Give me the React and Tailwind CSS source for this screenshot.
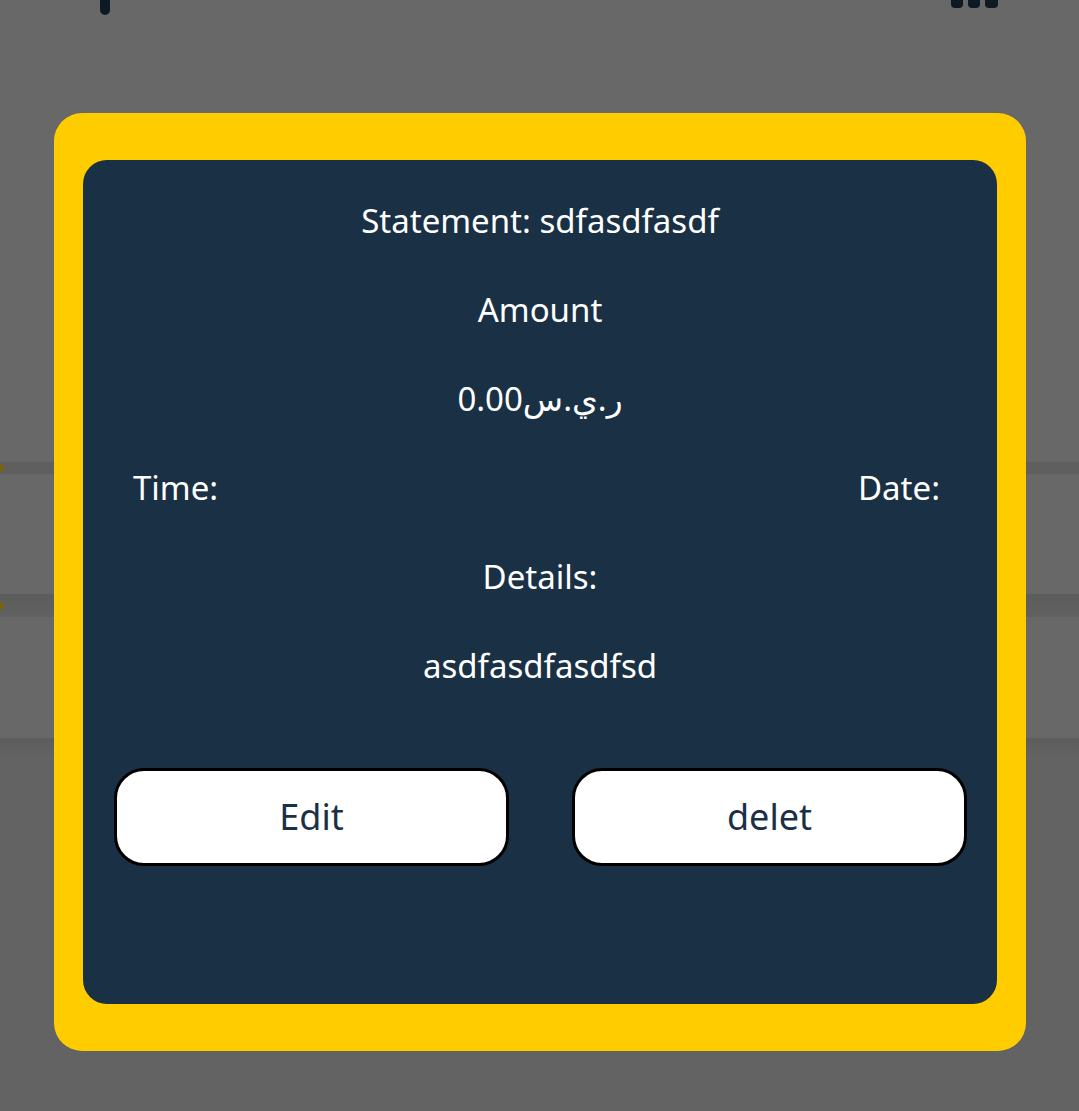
import React from "react";

export default function App() {
  const font = { fontFamily: '"Noto Sans", "DejaVu Sans", sans-serif' };
  return (
    <div className="relative w-[1079px] h-[1111px] overflow-hidden bg-[#636363]" style={font}>
      {/* underlying page (dimmed) */}
      <div className="flex flex-col">
        <div className="h-[462px] bg-[#686868] flex items-start justify-between">
          <div className="ml-[100px] w-[10px] h-[15px] rounded-b-[5px] bg-[#0d1a24]" />
          <div className="mr-[81px] flex gap-[5px]">
            <div className="w-[12px] h-[8px] rounded-b-[4px] bg-[#0d1a24]" />
            <div className="w-[12px] h-[8px] rounded-b-[4px] bg-[#0d1a24]" />
            <div className="w-[13px] h-[8px] rounded-b-[4px] bg-[#0d1a24]" />
          </div>
        </div>
        <div className="h-[12px] bg-[#5f5f5f] flex items-center">
          <div className="w-[4px] h-[8px] rounded-r-full bg-[#7a6310]" />
        </div>
        <div className="h-[120px] bg-[#686868]" />
        <div className="h-[23px] bg-gradient-to-b from-[#5c5c5c] to-[#616161] flex items-center">
          <div className="w-[4px] h-[8px] rounded-r-full bg-[#7a6310]" />
        </div>
        <div className="h-[121px] bg-[#686868]" />
        <div className="h-[20px] bg-gradient-to-b from-[#5c5c5c] to-[#636363]" />
      </div>

      {/* modal overlay */}
      <div className="absolute left-[54px] top-[113px] w-[972px] h-[938px] rounded-[28px] bg-[#ffcc00] px-[29px] py-[47px]">
        <div className="w-full h-full rounded-[24px] bg-[#1a3044] flex flex-col pt-[16px] text-white text-[33px]">
          <div className="h-[89px] flex items-center justify-center">Statement: sdfasdfasdf</div>
          <div className="h-[89px] flex items-center justify-center">Amount</div>
          <div className="h-[89px] flex items-center justify-center">0.00ر.ي.س</div>
          <div className="h-[89px] flex items-center justify-between pl-[50px] pr-[57px]">
            <span>Time:</span>
            <span>Date:</span>
          </div>
          <div className="h-[89px] flex items-center justify-center">Details:</div>
          <div className="h-[89px] flex items-center justify-center">asdfasdfasdfsd</div>
          <div className="mt-[58px] flex justify-between pl-[31px] pr-[30px]">
            <button className="w-[395px] h-[98px] rounded-[30px] border-[3px] border-black bg-white text-[#1a3044] text-[36px]">
              Edit
            </button>
            <button className="w-[395px] h-[98px] rounded-[30px] border-[3px] border-black bg-white text-[#1a3044] text-[36px]">
              delet
            </button>
          </div>
        </div>
      </div>
    </div>
  );
}
